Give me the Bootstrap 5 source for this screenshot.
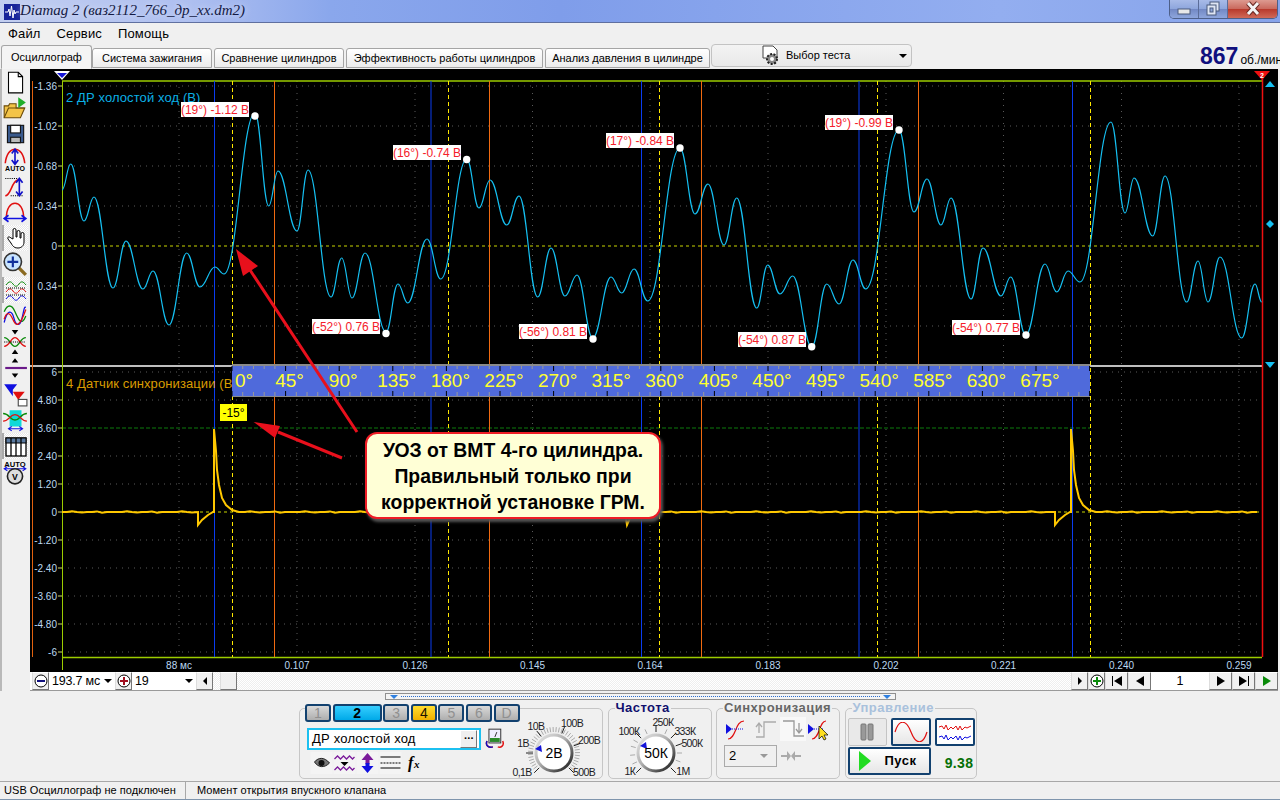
<!DOCTYPE html>
<html lang="ru">
<head>
  <meta charset="UTF-8" />
  <title>Diamag 2</title>
  <link href="https://cdn.jsdelivr.net/npm/bootstrap@5.3.0/dist/css/bootstrap.min.css" rel="stylesheet"/>
  <style>
    html, body { height: 800px; overflow: hidden; }
    body { background: #f0f0f0; color: #000; font-family: "Liberation Sans", Arial, sans-serif; font-size: 12px; }
    svg { display: block; }

    .win-title { height: 23px; border-bottom: 1px solid #5f6f9f; background: linear-gradient(90deg, #c2cef0 0, #aebff0 190px, #8aa7ec 330px, #7f9dea 560px, #93aef0 1000px, #86a3ea 100%); }
    .win-name { font-family: "Liberation Serif", serif; font-style: italic; font-size: 15px; color: #141a44; line-height: 21px; text-shadow: 0 0 6px #dfe6fa; }
    .win-btns { height: 19px; border: 1px solid #4d5f88; border-top: 0; border-radius: 0 0 5px 5px; margin-right: 2px; overflow: hidden; }
    .win-b { width: 29px; height: 18px; background: linear-gradient(#a8bbe8 0, #8da5dc 50%, #7288c4 51%, #8ea6dc 100%); border-right: 1px solid #5b6d99; }
    .win-x { width: 49px; border: 0; background: linear-gradient(#dd9a90 0, #c9685c 50%, #b8392c 51%, #d06a58 100%); }

    .menu-row { height: 22px; padding-left: 8px; gap: 16px; font-size: 13px; letter-spacing: .15px; line-height: 22px; }

    .tab-row { height: 24px; padding-left: 1px; }
    .tab-row .nav-tabs { border: 0; flex-wrap: nowrap; }
    .tab-row .nav-link { height: 20px; margin: 3px 2px 0 0; padding: 0; text-align: center; font-size: 11px; line-height: 18px; color: #000; white-space: nowrap; background: linear-gradient(#fff, #ececec); border: 1px solid #a5a5a5; border-radius: 3px 3px 0 0; }
    .tab-row .nav-link.active { height: 24px; margin: 0; line-height: 22px; background: #f4f4f4; border-color: #a5a5a5 #a5a5a5 #f4f4f4; }
    .test-pick { width: 201px; height: 23px; margin: -1px 0 0 -1px; background: linear-gradient(#f3f3f3, #e9e9e9); border: 1px solid #c3c3c3; border-radius: 4px; font-size: 11px; padding: 0 4px 0 48px; }
    .caret-dn { width: 0; height: 0; border-left: 4px solid transparent; border-right: 4px solid transparent; border-top: 4px solid #000; }
    .rpm { white-space: nowrap; width: 80px; margin-top: -1px; }
    .rpm b { font-size: 23px; color: #10107e; line-height: 24px; }
    .rpm span { font-size: 12px; margin-left: 2px; }

    .main-row { height: 622px; border-left: 2px solid #b9b9b9; }
    .side-tools { width: 28px; }
    .tool { width: 26px; height: 26px; }
    .tool-on { background: repeating-conic-gradient(#fff 0 25%, #e6e6e6 0 50%) 0 0 / 2px 2px; border-left: 2px solid #aaa; }
    .scope { width: 1248px; }
    .plot { height: 603px; background: #000; }
    .scale-text { font-size: 10px; fill: #bcd9f2; }
    .ch-text { font-size: 13px; letter-spacing: .1px; }
    .val-text { font-size: 12px; fill: #f5202a; }
    .deg-text { font-size: 19px; fill: #ffff30; }
    .callout { left: 335px; top: 363px; width: 296px; height: 87px; background: #ffffd6; border: 2px solid #ee1c25; border-radius: 12px; box-shadow: 2px 3px 3px #555; font-size: 19.4px; font-weight: 700; line-height: 26px; text-align: center; white-space: nowrap; }

    .ctrl-row { height: 19px; border-bottom: 1px solid #9a9a9a; background: #fff; padding-left: 2px; font-size: 12.5px; }
    .cb { width: 17px; height: 18px; background: #f0f0f0; border: 1px solid; border-color: #fff #777 #777 #ddd; flex: none; }
    .cb-w { width: 23px; }
    .pick { flex: none; line-height: 18px; padding: 0 3px; letter-spacing: -.2px; }
    .track { background: repeating-conic-gradient(#fff 0 25%, #eee 0 50%) 0 0 / 2px 2px; }
    .thumb { width: 17px; margin-left: 7px; }

    .split-bar { width: 511px; height: 7px; margin: 2px 0 0 385px; border: 1px solid #909090; padding: 0 4px; background: #f4f4f4; }
    .split-line { flex: 1; border-top: 1px dotted #2b6fd0; margin: 0 3px; }
    .split-tip { width: 0; height: 0; border-left: 4px solid transparent; border-right: 4px solid transparent; border-top: 4px solid #2f80e0; }

    .groups { height: 71px; margin-top: 8px; padding-left: 299px; gap: 4.5px; }
    .grp { height: 71px; border: 1px solid #c6c6c6; border-radius: 5px; }
    .grp-leg { top: -9px; left: 6px; background: #f0f0f0; font-size: 13px; font-weight: 700; line-height: 16px; letter-spacing: .45px; padding: 0 1px; white-space: nowrap; }
    .ch-set { top: -5px; left: 5px; background: #f0f0f0; gap: 1.6px; }
    .ch-btn { width: 26px; height: 18px; padding: 0; border: 2px solid #12416f; border-radius: 3px; background: linear-gradient(#d9d9d9, #aeaeae); color: #909090; font-size: 14px; line-height: 13px; }
    .ch-wide { width: 49px; background: linear-gradient(#36ceff, #00a9e8); color: #000; font-weight: 700; }
    .ch-amb { background: linear-gradient(#ffdd30, #efb000); color: #1a1200; }
    .ch-name { width: 177px; height: 22px; background: #fff; border: 2px solid #1cc0f0; padding: 0 2px 0 3px; font-size: 13px; line-height: 18px; letter-spacing: .2px; }
    .dots-btn { width: 17px; height: 18px; background: #efefef; border: 1px solid; border-color: #fff #777 #777 #fff; font-size: 11px; line-height: 9px; text-align: center; font-weight: 700; }
    .knob-text { font-size: 10.5px; letter-spacing: -.6px; fill: #1c1c24; }
    .g-pick { width: 53px; height: 22px; border: 1px solid #aaa; padding: 0 8px 0 4px; font-size: 13px; }
    .ctl { height: 28px; background: linear-gradient(#fff, #e6e6e6); border: 2px solid #12416f; border-radius: 2px; }
    .ctl-off { background: #e9e9e9; border: 1px solid #c4c4c4; }
    .ctl-go { width: 83px; height: 28px; font-weight: 700; font-size: 13px; letter-spacing: .5px; padding: 0 12px 0 8px; }
    .rate { color: #067006; font-weight: 700; font-size: 14px; letter-spacing: .4px; margin: 5px 2px 0 0; }

    .status-row { height: 18px; margin-top: 2px; border-top: 1px solid #a8a8a8; font-size: 11px; letter-spacing: .05px; line-height: 17px; }
    .st-cell { border-right: 1px solid #a8a8a8; height: 17px; padding-left: 4px; width: 186px; margin-right: 11px; }
    .st-edge { height: 2px; background: #7f95ad; }
  </style>
</head>
<body>
  <div class="win-title d-flex align-items-start">
    <svg class="ms-1 mt-1" width="16" height="16" viewBox="0 0 16 16"><rect width="16" height="16" fill="#18249a"/><path d="M1 8h3l1-3 1 7 1.500-10 1.500 12 1-8 1 4 1-2h3" fill="none" stroke="#fff"/></svg>
    <span class="win-name">Diamag 2 (ваз2112_766_др_хх.dm2)</span>
    <div class="win-btns d-flex ms-auto">
      <div class="win-b d-flex justify-content-center"><svg width="14" height="18" viewBox="0 0 14 18"><rect x="1" y="9" width="12" height="5" fill="#e8e8e8" stroke="#4a5a7c"/></svg></div>
      <div class="win-b d-flex justify-content-center"><svg width="16" height="18" viewBox="0 0 16 18"><rect x="5" y="2" width="9" height="9" fill="#dfe6f4" stroke="#4a5a7c"/><rect x="2" y="5" width="9" height="10" fill="#dfe6f4" stroke="#4a5a7c"/><rect x="5" y="8" width="3" height="4" fill="#8ea6dc" stroke="#4a5a7c"/></svg></div>
      <div class="win-b win-x d-flex justify-content-center"><svg width="16" height="18" viewBox="0 0 16 18"><path d="M3 3l10 11M13 3L3 14" stroke="#6b2a24" stroke-width="5"/><path d="M3 3l10 11M13 3L3 14" stroke="#f4f4f4" stroke-width="3"/></svg></div>
    </div>
  </div>

  <nav class="menu-row d-flex"><span>Файл</span><span>Сервис</span><span>Помощь</span></nav>

  <div class="tab-row d-flex align-items-start">
    <ul class="nav nav-tabs">
      <li class="nav-item"><a class="nav-link active" style="width:91px" href="#">Осциллограф</a></li>
      <li class="nav-item"><a class="nav-link" style="width:120px" href="#">Система зажигания</a></li>
      <li class="nav-item"><a class="nav-link" style="width:130px" href="#">Сравнение цилиндров</a></li>
      <li class="nav-item"><a class="nav-link" style="width:197px" href="#">Эффективность работы цилиндров</a></li>
      <li class="nav-item"><a class="nav-link" style="width:165px" href="#">Анализ давления в цилиндре</a></li>
    </ul>
    <div class="test-pick d-flex align-items-center">
      <svg width="22" height="21" viewBox="0 0 22 21"><path d="M3 1h10l4 4v8H3z" fill="#fff" stroke="#444"/><circle cx="12" cy="14" r="5" fill="#888" stroke="#222" stroke-width="2" stroke-dasharray="2 1.500"/><circle cx="12" cy="14" r="2" fill="#fff"/></svg>
      <span class="ms-1">Выбор теста</span>
      <span class="caret-dn ms-auto"></span>
    </div>
    <div class="rpm ms-auto"><b>867</b><span>об./мин</span></div>
  </div>

  <div class="main-row d-flex">
    <div class="side-tools d-flex flex-column">
      <div class="tool"><svg width="26" height="26" viewBox="0 0 24 24"><path d="M6 3h9l4 4v15H6z" fill="#fff" stroke="#000"/><path d="M15 3v4h4" fill="none" stroke="#000"/></svg></div>
      <div class="tool"><svg width="26" height="26" viewBox="0 0 24 24"><path d="M2 21V10h4l1-2h6v4h8l-4 9z" fill="#f3c448" stroke="#6a4a08"/><path d="M2 21l4-9h15" fill="none" stroke="#6a4a08"/><path d="M15 2l7 5-7 5z" fill="#1fae2a"/></svg></div>
      <div class="tool"><svg width="26" height="26" viewBox="0 0 24 24"><rect x="5" y="4" width="15" height="16" fill="#3a5a8c" stroke="#111"/><rect x="8" y="4" width="9" height="7" fill="#fff" stroke="#111"/><rect x="8" y="15" width="9" height="5" fill="#bbb" stroke="#111"/></svg></div>
      <div class="tool"><svg width="26" height="26" viewBox="0 0 24 24"><path d="M3 15C4 6 8 2 12 2s8 4 9 13" fill="none" stroke="#e01010" stroke-width="1.400"/><path d="M12 3v12M9 6l3-4 3 4M9 12l3 4 3-4" fill="none" stroke="#1010c8" stroke-width="1.500"/><text x="12" y="22.500" font-size="6.500" font-weight="700" text-anchor="middle">AUTO</text></svg></div>
      <div class="tool"><svg width="26" height="26" viewBox="0 0 24 24"><path d="M3 21c6 0 5-15 14-15" fill="none" stroke="#e01010" stroke-width="1.400"/><path d="M3 5h12M8 21h12" stroke="#000" stroke-dasharray="1 1"/><path d="M16 6v14M13 9l3-4 3 4M13 17l3 4 3-4" fill="none" stroke="#1010c8" stroke-width="1.500"/></svg></div>
      <div class="tool"><svg width="26" height="26" viewBox="0 0 24 24"><path d="M4 18C4 8 8 4 12 4s8 4 8 14" fill="none" stroke="#e01010" stroke-width="1.400"/><path d="M3 18h18M6 15l-4 3 4 3M18 15l4 3-4 3" fill="none" stroke="#1010e0" stroke-width="1.500"/></svg></div>
      <div class="tool tool-on"><svg width="24" height="26" viewBox="0 0 24 24"><path d="M9 13V4a1.500 1.500 0 0 1 3 0v7l1 0V6a1.300 1.300 0 0 1 3 0v6h1V8a1.300 1.300 0 0 1 3 0v8c0 4-3 6-6 6s-5-1-7-5l-3-4c-1-2 1-3 3-1z" fill="#fff" stroke="#000"/></svg></div>
      <div class="tool"><svg width="26" height="26" viewBox="0 0 24 24"><path d="M15 15l7 7" stroke="#8a6a20" stroke-width="3"/><circle cx="10" cy="10" r="8" fill="#c8e4ff" stroke="#333" stroke-width="1.500"/><path d="M10 5v10M5 10h10" stroke="#10309a" stroke-width="2"/></svg></div>
      <div class="tool tool-on"><svg width="24" height="26" viewBox="0 0 24 24"><path d="M2 7c3-4 5-4 7-1s4 3 6 0 4-3 7 1" fill="none" stroke="#0a8a0a"/><path d="M2 14c3-4 5-4 7-1s4 3 6 0 4-3 7 1" fill="none" stroke="#e01010"/><path d="M2 21c3-4 5-4 7-1s4 3 6 0 4-3 7 1" fill="none" stroke="#1010e0"/><path d="M2 10h20M2 17h20" stroke="#000" stroke-dasharray="1 1"/></svg></div>
      <div class="tool"><svg width="26" height="26" viewBox="0 0 24 24"><path d="M2 8C5 1 9 1 12 8s6 14 10 4" fill="none" stroke="#0a8a0a" stroke-width="1.200"/><path d="M2 18C5 6 9 6 11 14s6 8 8-2 2-8 3-8" fill="none" stroke="#1010e0" stroke-width="1.200"/><path d="M2 15C4 8 7 8 10 15s6 8 12-9" fill="none" stroke="#e01010" stroke-width="1.200"/></svg></div>
      <div class="tool"><svg width="26" height="26" viewBox="0 0 24 24"><path d="M9 1h6l-3 4zM9 23h6l-3-4z"/><path d="M2 8c5 0 6 8 10 8s5-8 10-8" fill="none" stroke="#0a8a0a" stroke-width="1.300"/><path d="M2 16c5 0 6-8 10-8s5 8 10 8" fill="none" stroke="#e01010" stroke-width="1.300"/><path d="M2 12h20" stroke="#000" stroke-dasharray="1 1"/></svg></div>
      <div class="tool"><svg width="26" height="26" viewBox="0 0 24 24"><path d="M9 7l3-4 3 4zM9 17l3 4 3-4z"/><rect x="3" y="11" width="20" height="2" fill="#6a1a8a"/></svg></div>
      <div class="tool"><svg width="26" height="26" viewBox="0 0 24 24"><path d="M2 3h12l-4 5v6z" fill="#1010e0"/><path d="M10 10h11l-5 6v3z" fill="#e01010"/><rect x="15" y="17" width="8" height="6" fill="#fff" stroke="#444"/></svg></div>
      <div class="tool"><svg width="26" height="26" viewBox="0 0 24 24"><rect x="7" y="3" width="11" height="15" fill="#10d8d8"/><path d="M1 6c6 0 6 6 11 6s5-6 11-6" fill="none" stroke="#0a8a0a" stroke-width="1.300"/><path d="M1 13c6 0 6-6 11-6s5 6 11 6" fill="none" stroke="#e01010" stroke-width="1.300"/><path d="M7 20h11M9 18l-3 2 3 2M16 18l3 2-3 2" fill="none" stroke="#1010e0"/></svg></div>
      <div class="tool tool-on"><svg width="24" height="26" viewBox="0 0 24 24"><rect x="2" y="4" width="20" height="18" fill="#fff" stroke="#000" stroke-width="1.300"/><rect x="2" y="4" width="20" height="5" fill="#5a7aa0" stroke="#000"/><path d="M7 4v18M12 4v18M17 4v18" stroke="#000" stroke-width="1.300"/></svg></div>
      <div class="tool"><svg width="26" height="26" viewBox="0 0 24 24"><text x="12" y="7" font-size="7" font-weight="700" text-anchor="middle">AUTO</text><path d="M2 9h20M5 7L2 9l3 2M19 7l3 2-3 2" fill="none" stroke="#1010e0"/><circle cx="12" cy="16" r="7" fill="#ddd" stroke="#222" stroke-width="1.500"/><text x="12" y="19" font-size="8" font-weight="700" text-anchor="middle">V</text></svg></div>
    </div>

    <div class="scope">
      <div class="plot position-relative">
        <svg id="chart" width="1248" height="603" viewBox="30 69 1248 603"></svg>
        <div class="callout position-absolute d-flex flex-column justify-content-center">
          <div>УОЗ от ВМТ 4-го цилиндра.</div>
          <div>Правильный только при</div>
          <div>корректной установке ГРМ.</div>
        </div>
      </div>
      <div class="ctrl-row d-flex">
        <div class="cb d-flex align-items-center justify-content-center"><svg width="14" height="14" viewBox="0 0 14 14"><circle cx="7" cy="7" r="6" fill="#fff" stroke="#000"/><rect x="3" y="6" width="8" height="2" fill="#10107e"/></svg></div>
        <div class="pick d-flex align-items-center" style="width:66px"><span>193.7 мс</span><span class="caret-dn ms-auto"></span></div>
        <div class="cb d-flex align-items-center justify-content-center"><svg width="14" height="14" viewBox="0 0 14 14"><circle cx="7" cy="7" r="6" fill="#fff" stroke="#000"/><path d="M3 7h8M7 3v8" stroke="#a01020" stroke-width="2"/></svg></div>
        <div class="pick d-flex align-items-center" style="width:64px"><span>19</span><span class="caret-dn ms-auto"></span></div>
        <div class="cb d-flex align-items-center justify-content-center"><svg width="8" height="10" viewBox="0 0 8 10"><path d="M6 1v8L2 5z"/></svg></div>
        <div class="track flex-grow-1 d-flex"><div class="cb thumb"></div></div>
        <div class="cb d-flex align-items-center justify-content-center"><svg width="8" height="10" viewBox="0 0 8 10"><path d="M2 1v8l4-4z"/></svg></div>
        <div class="cb d-flex align-items-center justify-content-center"><svg width="14" height="14" viewBox="0 0 14 14"><circle cx="7" cy="7" r="6" fill="#fff" stroke="#000"/><path d="M3 7h8M7 3v8" stroke="#0a8a0a" stroke-width="2"/></svg></div>
        <div class="cb cb-w d-flex align-items-center justify-content-center"><svg width="12" height="10" viewBox="0 0 12 10"><path d="M1 0h1v10H1zM11 0v10L3 5z"/></svg></div>
        <div class="cb cb-w d-flex align-items-center justify-content-center"><svg width="10" height="10" viewBox="0 0 10 10"><path d="M9 0v10L1 5z"/></svg></div>
        <div class="text-center" style="width:58px">1</div>
        <div class="cb cb-w d-flex align-items-center justify-content-center"><svg width="10" height="10" viewBox="0 0 10 10"><path d="M1 0v10l8-5z"/></svg></div>
        <div class="cb cb-w d-flex align-items-center justify-content-center"><svg width="12" height="10" viewBox="0 0 12 10"><path d="M1 0v10l8-5zM10 0h1v10h-1z"/></svg></div>
        <div class="cb cb-w ms-auto d-flex align-items-center justify-content-center"><svg width="10" height="10" viewBox="0 0 10 10"><path d="M1 0v10l8-5z" fill="#0a8a0a"/></svg></div>
      </div>
    </div>
  </div>

  <div class="split-bar d-flex align-items-center">
    <span class="split-tip"></span><span class="split-line"></span><span class="split-tip"></span>
  </div>

  <div class="groups d-flex">
    <div class="grp position-relative d-flex" style="width:304px">
      <div class="ch-set position-absolute d-flex">
        <button class="ch-btn">1</button><button class="ch-btn ch-wide">2</button><button class="ch-btn">3</button><button class="ch-btn ch-amb">4</button><button class="ch-btn">5</button><button class="ch-btn">6</button><button class="ch-btn">D</button>
      </div>
      <div style="padding:19px 0 0 7px;width:205px">
        <div class="d-flex align-items-center">
          <div class="ch-name d-flex align-items-center"><span>ДР холостой ход</span><span class="dots-btn ms-auto">...</span></div>
          <svg class="ms-1" width="20" height="22" viewBox="0 0 20 22"><rect x="4" y="1" width="12" height="14" fill="#eef" stroke="#333"/><rect x="5" y="10" width="10" height="4" fill="#2a8a2a"/><path d="M10 9l2-5" stroke="#333"/><path d="M2 13c-2 5 2 7 6 6M18 13c2 5-2 7-5 6" fill="none" stroke-width="1.500" stroke="#e01010"/><path d="M2 13c-2 5 2 7 6 6" fill="none" stroke-width="1.500" stroke="#1010c0"/></svg>
        </div>
        <div class="d-flex align-items-center" style="margin-top:2px;padding-left:3px">
          <svg width="23" height="22" viewBox="0 0 22 22"><rect width="22" height="22" fill="#f4f4f4"/><path d="M4 10c4-5 10-5 15 1-5 5-11 5-15-1z" fill="#777" stroke="#222"/><circle cx="11" cy="11" r="3" fill="#111"/></svg>
          <svg width="23" height="22" viewBox="0 0 22 22"><rect width="22" height="22" fill="#f4f4f4"/><path d="M1 7l3-3 3 3 3-3 3 3 3-3 3 3 2-2M1 18l3-3 3 3 3-3 3 3 3-3 3 3 2-2" fill="none" stroke="#7a1a9a" stroke-width="1.300"/><path d="M7 10h8l-4 4z"/></svg>
          <svg width="23" height="22" viewBox="0 0 22 22"><rect width="22" height="22" fill="#f4f4f4"/><path d="M11 1l6 7h-4v4H9V8H5z" fill="#7a1a9a"/><path d="M11 21l6-7h-4v-3H9v3H5z" fill="#1010e0"/></svg>
          <svg width="23" height="22" viewBox="0 0 22 22"><rect width="22" height="22" fill="#f4f4f4"/><path d="M1 5h20M1 16h20" stroke="#000" stroke-width="1.200"/><path d="M1 11h20" stroke="#000" stroke-dasharray="2 1"/></svg>
          <svg class="ms-1" width="20" height="22" viewBox="0 0 20 22"><text x="2" y="16" font-family="Liberation Serif" font-style="italic" font-weight="700" font-size="16">f</text><text x="8" y="16" font-family="Liberation Serif" font-style="italic" font-weight="700" font-size="11">x</text></svg>
        </div>
      </div>
      <svg id="knobA" class="ms-auto" width="95" height="69" viewBox="506 708 95 69"></svg>
    </div>

    <div class="grp position-relative" style="width:104px">
      <div class="grp-leg position-absolute" style="color:#10106e">Частота</div>
      <svg id="knobB" width="102" height="69" viewBox="608 708 102 69"></svg>
    </div>

    <div class="grp position-relative" style="width:124px;padding:8px 0 0 7px">
      <div class="grp-leg position-absolute" style="color:#666">Синхронизация</div>
      <div class="d-flex align-items-center">
        <svg width="28" height="24" viewBox="0 0 28 24"><path d="M4 22c8 0 7-18 16-18" fill="none" stroke="#e01010" stroke-width="1.200"/><path d="M2 7v10l6-5z" fill="#1010e0"/><path d="M8 12h12" stroke="#1010e0" stroke-dasharray="1 1"/></svg>
        <svg width="28" height="24" viewBox="0 0 28 24"><path d="M4 20h8V5h12" fill="none" stroke="#aaa" stroke-width="1.300"/><path d="M7 16V7M4 10l3-4 3 4" fill="none" stroke="#aaa" stroke-width="1.300"/></svg>
        <svg width="26" height="24" viewBox="0 0 26 24"><rect width="26" height="24" fill="#f8f8f8"/><path d="M3 4h11v15h10" fill="none" stroke="#999" stroke-width="1.300"/><path d="M19 6v9M16 12l3 4 3-4" fill="none" stroke="#999" stroke-width="1.300"/></svg>
        <svg width="26" height="24" viewBox="0 0 26 24"><path d="M6 22c8 0 7-18 14-18" fill="none" stroke="#e01010" stroke-width="1.200"/><path d="M2 7v10l6-5z" fill="#1010e0"/><path d="M8 12h10" stroke="#1010e0" stroke-dasharray="1 1"/><path d="M13 9v13l3-3 2 4 2-1-2-4h4z" fill="#ffe020" stroke="#000" stroke-width=".7"/></svg>
      </div>
      <div class="d-flex align-items-center" style="margin-top:4px">
        <div class="g-pick d-flex align-items-center"><span>2</span><span class="caret-dn ms-auto" style="border-top-color:#999"></span></div>
        <svg class="ms-1" width="20" height="12" viewBox="0 0 20 12"><path d="M0 5h6V1l4 5-4 5V7H0zM20 5h-6V1l-4 5 4 5V7h6z" fill="#aaa"/></svg>
      </div>
    </div>

    <div class="grp position-relative" style="width:132px;padding:9px 0 0 2px">
      <div class="grp-leg position-absolute" style="color:#a9c1dc">Управление</div>
      <div class="d-flex gap-1">
        <div class="ctl ctl-off d-flex align-items-center justify-content-center" style="width:39px"><svg width="14" height="18" viewBox="0 0 14 18"><rect x="1" y="1" width="5" height="16" rx="1" fill="#999" stroke="#777"/><rect x="8" y="1" width="5" height="16" rx="1" fill="#999" stroke="#777"/></svg></div>
        <div class="ctl d-flex align-items-center justify-content-center" style="width:40px"><svg width="34" height="20" viewBox="0 0 34 20"><path d="M1 10C5-3 12-3 17 10s12 13 16 0" fill="none" stroke="#e01010" stroke-width="1.200"/></svg></div>
        <div class="ctl d-flex align-items-center justify-content-center" style="width:40px;background:#fff"><svg width="34" height="20" viewBox="0 0 34 20"><path d="M1 5l3-1 2 3 2-4 2 5 3-3 2 2 3-3 2 4 2-4 2 4 3-3 2 1 4-2" fill="none" stroke="#e01010"/><path d="M1 15l3-1 2 3 2-4 2 5 3-3 2 2 3-3 2 4 2-4 2 4 3-3 2 1 4-2" fill="none" stroke="#1010e0"/></svg></div>
      </div>
      <div class="d-flex align-items-center" style="margin-top:1px">
        <div class="ctl ctl-go d-flex align-items-center"><svg width="14" height="22" viewBox="0 0 14 22"><path d="M1 1v20l12-10z" fill="#22dc22"/></svg><span class="ms-auto">Пуск</span></div>
        <span class="rate ms-auto">9.38</span>
      </div>
    </div>
  </div>

  <footer class="status-row d-flex">
    <div class="st-cell">USB Осциллограф не подключен</div>
    <div>Момент открытия впускного клапана</div>
  </footer>
  <div class="st-edge"></div>

  <script>
    const trace = [[62,190],[70.7,164],[84,221],[94,197],[113,288],[126,241],[143,289],[153,271],[169,325],[186.700,253],[200,287],[215,267],[224,274],[255,113],[268.700,206],[278,171],[297,231],[308,170],[331,297],[341.700,258],[352,298],[365,253],[386,332],[398,284],[407.700,303],[427,239],[440.700,279],[466.700,159],
      [479,208],[490,180],[506.700,225],[519,196],[537.700,297],[551,248],[565,296],[577,275],[592.700,338],[611,277],[621.700,293],[634,269],[647.700,301],[680,148],[695,214],[708,184],[724,245],[736.700,198],[756.700,308],[767.700,265],[780,294],[792.700,276],[811.700,347],[826.700,284],[839,304],[853,260],[865.700,289],
      [899,130],[914,212],[927,179],[941,225],[951,198],[971,299],[983,248],[1001,296],[1010.700,277],[1025.700,335],[1045,264],[1056.700,292],[1068,271],[1080,282],[1111,122],[1125,213],[1134,178],[1152.700,236],[1165,176],[1186.700,302],[1198,261],[1208,302],[1220,257],[1241.700,338],[1255,284],[1261.700,302]];
    const grid = [86,126,166,206,286,326,400,456,484,540,568,596,624,652,372];
    const gridX = [179,297,415,532.500,650,768,886,1003.500,1121.500,1239];
    const leftScale = [['-1.36',86],['-1.02',126],['-0.68',166],['-0.34',206],['0',246],['0.34',286],['0.68',326],['6',372],['4.80',400],['3.60',428],['2.40',456],['1.20',484],['0',512],['-1.20',540],['-2.40',568],['-3.60',596],['-4.80',624],['-6',652]];
    const bottomScale = ['88 мс','0.107','0.126','0.145','0.164','0.183','0.202','0.221','0.240','0.259'];
    const marks = [['(19°) -1.12 В',181,102,255,116],['(16°) -0.74 В',393,145,466.700,159.500],['(-52°) 0.76 В',312,319,386,333.500],['(17°) -0.84 В',606,133,680,148],['(-56°) 0.81 В',519,324,593,339],['(-54°) 0.87 В',738,332,811.700,346.700],['(19°) -0.99 В',825,115,899,130],['(-54°) 0.77 В',952,320,1026,335]];

    function smooth(p) {
      let d = `M${p[0][0]} ${p[0][1]}`;
      for (let i = 1; i < p.length; i++) {
        const dx = (p[i][0] - p[i-1][0]) * 0.42;
        d += `C${p[i-1][0]+dx} ${p[i-1][1]} ${p[i][0]-dx} ${p[i][1]} ${p[i][0]} ${p[i][1]}`;
      }
      return d;
    }

    function flat(x0, x1) {
      const bumps = [0,0,.8,0,-.6,0,0,.6,-.8,0,0];
      const out = [];
      for (let x = x0, i = 0; x < x1; x += 5, i++) out.push([x, 512 - bumps[i % bumps.length]]);
      return out;
    }
    function pulse(x) {
      return [[x-16,512],[x-16,525],[x-12,520],[x-6,515],[x-1,512],[x,512],[x,429],[x+2,451],[x+3,470],[x+5,485],[x+8,498],[x+12,505],[x+18,510],[x+25,512]];
    }
    const sync = flat(62,197).concat(pulse(214), flat(240,627), [[627,525],[630,518],[634,513]], flat(636,1055), pulse(1071), flat(1097,1262));

    let s = '';
    grid.forEach(y => s += `<path d="M62 ${y}H1262" stroke="#5a5a5a" stroke-dasharray="1 5"/>`);
    gridX.forEach(x => s += `<path d="M${x} 81V657" stroke="#5a5a5a" stroke-dasharray="1 5"/>`);
    s += '<path d="M62 246H1262M62 512H1262" stroke="#c8d400" stroke-dasharray="3 3"/>';
    s += '<path d="M62 428H1090" stroke="#0c7a0c" stroke-dasharray="4 2"/>';
    s += '<path d="M30 366H1262" stroke="#fff" stroke-width="1.500"/>';
    s += '<path d="M32.500 81V657" stroke="#e2620e"/>';
    s += '<path d="M62 81H1262M62 657.500H1262" stroke="#9ccc00" stroke-width="1.500"/><path d="M62.500 81V670" stroke="#9ccc00"/>';
    [214.500,431,641.500,859,1072.500].forEach(x => s += `<path d="M${x} 81V657" stroke="#0a3cf0"/>`);
    [232.500,448.500,659.500,877.500,1090.500].forEach(x => s += `<path d="M${x} 81V657" stroke="#ffe800" stroke-dasharray="4 3"/>`);
    [274.500,489.500,701.500,918.500].forEach(x => s += `<path d="M${x} 81V657" stroke="#f06a10"/>`);
    s += '<path d="M1262.500 74V657" stroke="#f01010" stroke-width="1.500"/>';

    s += `<path d="${smooth(trace)}" fill="none" stroke="#15c0f2" stroke-width="1.200"/>`;
    s += `<path d="M${sync.map(p => p.join(' ')).join('L')}" fill="none" stroke="#ffc800" stroke-width="2"/>`;

    leftScale.forEach(([t,y]) => s += `<text class="scale-text" x="57" y="${y+4}" text-anchor="end">${t}</text><path d="M58 ${y}H62" stroke="#d0d870"/>`);
    bottomScale.forEach((t,i) => s += `<text class="scale-text" x="${gridX[i]}" y="669" text-anchor="middle">${t}</text>`);

    s += '<text class="ch-text" x="66" y="102" fill="#0bb0e6">2 ДР холостой ход (В)</text>';
    s += '<text class="ch-text" x="66" y="388" fill="#d99c00">4 Датчик синхронизации (В)</text>';

    // degree strip over the second channel
    s += '<rect x="232" y="364" width="858" height="33" fill="#4f6adb"/><path d="M232 365H1090" stroke="#8a8a8a" stroke-width="2"/><path d="M232 396.500H1090" stroke="#8a8a8a"/>';
    for (let i = 0; i <= 80; i++) {
      const x = 232 + i * 10.72;
      s += i % 5 ? `<path d="M${x} 366v3M${x} 392v4" stroke="#9a9a9a"/>` : `<path d="M${x} 366v5M${x} 391v5" stroke="#000"/>`;
    }
    for (let i = 0; i < 16; i++) {
      const x = i ? 232 + i * 53.6 + 4 : 244;
      s += `<text class="deg-text" x="${x}" y="387" text-anchor="middle">${i * 45}°</text>`;
    }

    marks.forEach(([t,x,y,px,py]) => {
      s += `<rect x="${x}" y="${y}" width="68" height="15" fill="#fff"/><text class="val-text" x="${x+34}" y="${y+12}" text-anchor="middle">${t}</text>`;
      s += `<circle cx="${px}" cy="${py}" r="3.700" fill="#fff"/>`;
    });

    s += '<rect x="220" y="404" width="27" height="17" fill="#ffff00"/><text x="233.500" y="417" font-size="12" text-anchor="middle">-15°</text>';

    s += '<path d="M54 71h16l-8 9z" fill="#fff"/><path d="M57 73h10l-5 5z" fill="#1414d8"/>';
    s += '<path d="M1254 71h16l-8 9z" fill="#f01010"/><text x="1262" y="78" font-size="7" font-weight="700" fill="#fff" text-anchor="middle">2</text>';
    s += '<path d="M1265 87l5-6 5 6z" fill="#15c0f2"/><path d="M1265 362l5 6 5-6z" fill="#15c0f2"/><path d="M1270 220l4 4-4 4-4-4z" fill="#15c0f2"/>';

    s += '<path d="M357 432L248 267M342 458L278 432" stroke="#e8101c" stroke-width="3"/>';
    s += '<path d="M236 249L258 266L243 276z" fill="#e8101c"/><path d="M253.500 422L280 426L275 438z" fill="#e8101c"/>';
    document.getElementById('chart').innerHTML = s;

    function knob(id, cx, cy, r, majors, minors, pointer, label, labels) {
      const at = (deg, rad) => [cx + rad * Math.sin(deg * Math.PI / 180), cy - rad * Math.cos(deg * Math.PI / 180)];
      let k = `<defs><linearGradient id="${id}G" x1="0" y1="0" x2="1" y2="1"><stop offset="0" stop-color="#e8e8e8"/><stop offset=".45" stop-color="#b0b0b0"/><stop offset="1" stop-color="#111"/></linearGradient></defs>`;
      minors.forEach(a => { const p = at(a, r+3), q = at(a, r+8); k += `<path d="M${p[0]} ${p[1]}L${q[0]} ${q[1]}" stroke="#aaa"/>`; });
      majors.forEach(a => { const p = at(a, r+3), q = at(a, r+10); k += `<path d="M${p[0]} ${p[1]}L${q[0]} ${q[1]}" stroke="#222"/>`; });
      k += `<circle cx="${cx}" cy="${cy}" r="${r}" fill="#fff" stroke="url(#${id}G)" stroke-width="3"/>`;
      k += `<path d="M${pointer[0]-5} ${pointer[1]}l6-4 1 7z" fill="#1414d8"/>`;
      k += `<text x="${cx}" y="${cy+5}" font-size="14" text-anchor="middle">${label}</text>`;
      labels.forEach(([t,x,y]) => k += `<text class="knob-text" x="${x}" y="${y}" text-anchor="middle">${t}</text>`);
      document.getElementById(id).innerHTML = k;
    }
    const fine = []; for (let a = -135; a <= 135; a += 7) fine.push(a);
    knob('knobA', 553, 752, 18, [-135,-90,-38,22,70,135], fine, [539,748], '2В',
      [['10В',535,729],['100В',571,726],['200В',588,743],['1В',522,746],['0,1В',521,775],['500В',583,775]]);
    knob('knobB', 655, 752, 18, [-135,-45,0,45,70,135], [-115,-95,-75,-60,-25,25,90,110], [644,745], '50К',
      [['100К',628,734],['250К',662,725],['333К',684,734],['500К',691,746],['1К',629,774],['1М',682,774]]);
  </script>
  <script src="https://cdn.jsdelivr.net/npm/bootstrap@5.3.0/dist/js/bootstrap.bundle.min.js"></script>
</body>
</html>
